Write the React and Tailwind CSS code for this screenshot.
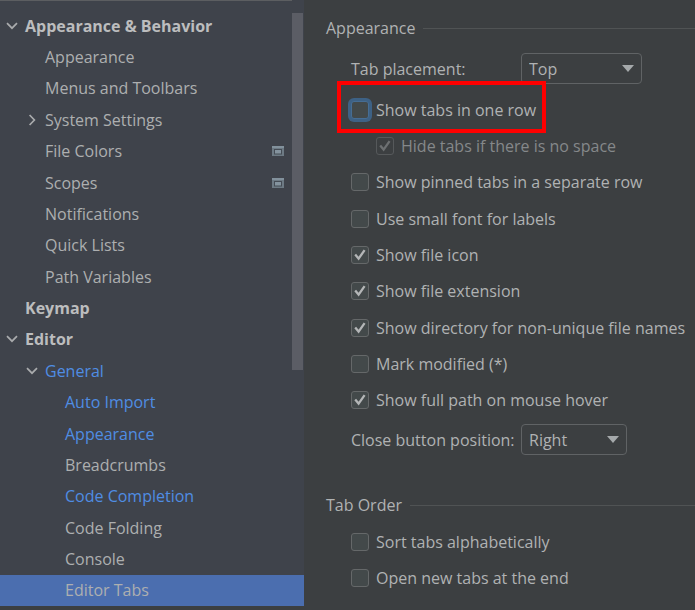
const tree = [
  { label: "Appearance & Behavior", level: 0, arrow: "down" },
  { label: "Appearance", level: 1 },
  { label: "Menus and Toolbars", level: 1 },
  { label: "System Settings", level: 1, arrow: "right" },
  { label: "File Colors", level: 1, project: true },
  { label: "Scopes", level: 1, project: true },
  { label: "Notifications", level: 1 },
  { label: "Quick Lists", level: 1 },
  { label: "Path Variables", level: 1 },
  { label: "Keymap", level: 0 },
  { label: "Editor", level: 0, arrow: "down" },
  { label: "General", level: 1, arrow: "down", modified: true },
  { label: "Auto Import", level: 2, modified: true },
  { label: "Appearance", level: 2, modified: true },
  { label: "Breadcrumbs", level: 2 },
  { label: "Code Completion", level: 2, modified: true },
  { label: "Code Folding", level: 2 },
  { label: "Console", level: 2 },
  { label: "Editor Tabs", level: 2, selected: true },
];

const indents = ["pl-1", "pl-6", "pl-11"];

function Arrow({ direction }) {
  return (
    <svg viewBox="0 0 16 16" className="size-4 shrink-0" fill="none" stroke="#a9abad" strokeWidth="1.7" aria-hidden="true">
      {direction === "down" && <path d="M3 5.2 8 10.2 13 5.2" />}
      {direction === "right" && <path d="M5.6 3 10.4 8 5.6 13" />}
    </svg>
  );
}

function ProjectIcon() {
  return (
    <svg viewBox="0 0 12 10" className="h-[10px] w-3" aria-hidden="true">
      <path fill="#6d7a84" d="M0 0h12v10H0z" />
      <path fill="#82919c" d="M0 0h12v2H0z" />
      <path fill="#454c55" d="M2 3h8v5.5H2z" />
      <rect x="3" y="4" width="6" height="3.5" fill="#84939e" />
    </svg>
  );
}

function TreeRow({ item }) {
  const color = item.modified ? "text-[#4f8de3]" : item.level === 0 ? "text-[#bcbdbe]" : "text-[#adafb0]";
  return (
    <li className={`flex min-h-[31px] flex-1 ${item.selected ? "bg-[#4b6eaf]" : ""}`}>
      <a href="#" className={`flex flex-1 items-center gap-[5px] pr-5 ${indents[item.level]} ${color} ${item.level === 0 ? "font-bold" : ""}`}>
        <Arrow direction={item.arrow} />
        <span className="flex-1">{item.label}</span>
        {item.project && <ProjectIcon />}
      </a>
    </li>
  );
}

function CheckRow({ label, checked = false, disabled = false, focused = false }) {
  return (
    <label className={`relative flex h-9 items-center gap-[7px] ${disabled ? "pl-[25px] text-[#85888a]" : ""}`}>
      <span className="grid size-[18px] shrink-0 place-items-center">
        <input
          type="checkbox"
          defaultChecked={checked}
          disabled={disabled}
          className={`peer col-start-1 row-start-1 size-[18px] appearance-none rounded-[3px] border outline-none ${
            focused
              ? "border-[#466d94] bg-[#43494a] ring-3 ring-[#3d6185]"
              : disabled
                ? "border-[#56595b] bg-transparent"
                : "border-[#656869] bg-[#43494a]"
          }`}
        />
        <svg
          viewBox="0 0 18 18"
          className={`pointer-events-none col-start-1 row-start-1 size-[18px] opacity-0 peer-checked:opacity-100 ${disabled ? "text-[#6d7072]" : "text-[#b4b6b7]"}`}
          fill="none"
          stroke="currentColor"
          strokeWidth="2.3"
          aria-hidden="true"
        >
          <path d="M4.2 8.6 7.6 12.6 13.6 4.2" />
        </svg>
      </span>
      <span>{label}</span>
      {focused && <span className="pointer-events-none absolute -top-[11px] -left-[14px] h-[52px] w-[209px] border-4 border-[#ff0000]" />}
    </label>
  );
}

function SelectRow({ id, label, value, options, width }) {
  return (
    <div className="flex items-center">
      <label htmlFor={id} className="w-[170px]">{label}</label>
      <div className={`relative ${width}`}>
        <select
          id={id}
          defaultValue={value}
          className="block h-[31px] w-full appearance-none rounded-[4px] border border-[#606365] bg-[#3c3f41] pl-[7px] outline-none"
        >
          {options.map((option) => (
            <option key={option}>{option}</option>
          ))}
        </select>
        <svg viewBox="0 0 12 7" className="pointer-events-none absolute top-3 right-2 h-[7px] w-3" fill="#a5a9ab" aria-hidden="true">
          <path d="M0 0h12L6 7z" />
        </svg>
      </div>
    </div>
  );
}

function Section({ title, children }) {
  return (
    <section>
      <div className="flex items-center gap-2">
        <h2>{title}</h2>
        <span className="h-px flex-1 bg-[#505354]" />
      </div>
      <div className="pl-[25px]">{children}</div>
    </section>
  );
}

export default function App() {
  return (
    <div className="flex min-h-screen bg-[#3c3f41] font-['Open_Sans','Noto_Sans',sans-serif] text-[16px] leading-5 text-[#b0b2b3]">
      <nav aria-label="Settings" className="relative flex w-[304px] shrink-0 flex-col border-b-4 border-[#3c3f41] bg-[#3f434b]">
        <div className="mr-3 h-px bg-[#5c5e61]" />
        <ul className="flex flex-1 flex-col pt-[9px]">
          {tree.map((item) => (
            <TreeRow key={item.label + item.level} item={item} />
          ))}
        </ul>
        <div className="absolute top-[13px] right-px h-[357px] w-[11px] bg-[#5b5d65]" />
      </nav>
      <main className="flex flex-1 flex-col gap-10 pt-[18px] pl-[22px]">
        <Section title="Appearance">
          <div className="pt-[15px] pb-2">
            <SelectRow id="placement" label="Tab placement:" value="Top" options={["Top", "Bottom", "Left", "Right", "None"]} width="w-[121px]" />
          </div>
          <div className="flex flex-col gap-px">
            <div>
              <CheckRow label="Show tabs in one row" focused />
              <CheckRow label="Hide tabs if there is no space" checked disabled />
              <CheckRow label="Show pinned tabs in a separate row" />
            </div>
            <div>
              <CheckRow label="Use small font for labels" />
              <CheckRow label="Show file icon" checked />
              <CheckRow label="Show file extension" checked />
            </div>
            <div>
              <CheckRow label="Show directory for non-unique file names" checked />
              <CheckRow label="Mark modified (*)" />
              <CheckRow label="Show full path on mouse hover" checked />
            </div>
          </div>
          <div className="pt-[6px]">
            <SelectRow id="close" label="Close button position:" value="Right" options={["Right", "Left", "None"]} width="w-[106px]" />
          </div>
        </Section>
        <Section title="Tab Order">
          <div className="pt-[9px]">
            <CheckRow label="Sort tabs alphabetically" />
            <CheckRow label="Open new tabs at the end" />
          </div>
        </Section>
      </main>
    </div>
  );
}
